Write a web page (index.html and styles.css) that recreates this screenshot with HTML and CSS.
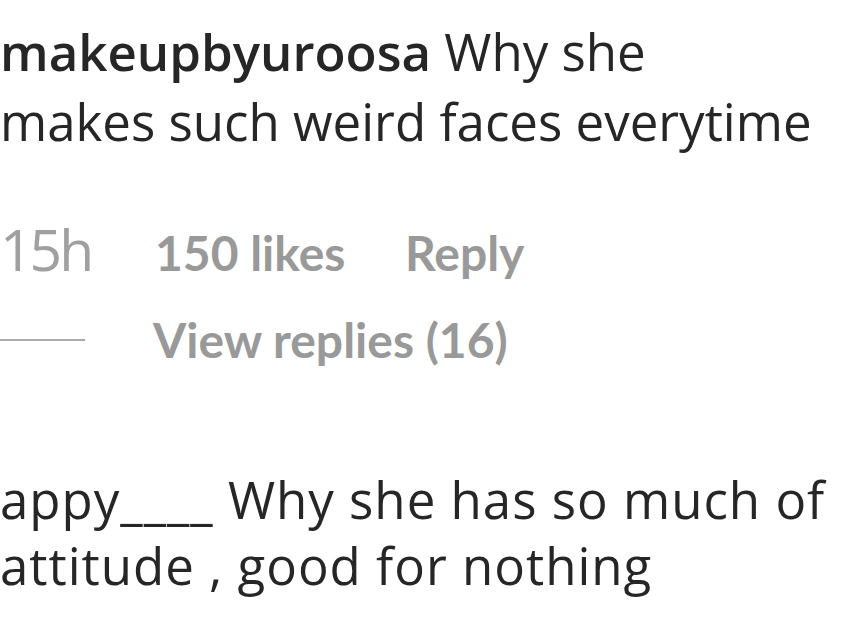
FILE: index.html
```html
<!DOCTYPE html>
<html>
<head>
  <meta charset="UTF-8">
  <title>Comments</title>
  <link rel="stylesheet" href="styles.css">
</head>
<body>
  <div class="comment">
    <p class="comment-text"><span class="user">makeupbyuroosa</span> Why she<br>makes such weird faces everytime</p>
    <div class="comment-meta">
      <span class="time">15h</span>
      <span class="likes">150 likes</span>
      <span class="reply">Reply</span>
    </div>
    <div class="replies">
      <span class="replies-line"></span>
      <span class="replies-link">View replies (16)</span>
    </div>
  </div>

  <div class="comment comment-next">
    <p class="comment-text narrow"><span class="user-plain">appy____</span> Why she has so much of<br>attitude , good for nothing</p>
  </div>
</body>
</html>
```

FILE: styles.css
```css
body {
  margin: 0;
  background: #fff;
  overflow: hidden;
}

.comment {
  padding-top: 16px;
}

.comment-text {
  margin: 0;
  font-family: "Open Sans", sans-serif;
  font-size: 51px;
  line-height: 70px;
  color: #262626;
  white-space: nowrap;
}

.user {
  font-weight: 600;
}

.comment-meta {
  display: flex;
  align-items: baseline;
  margin-top: 54px;
  color: #999;
  height: 60px;
}

.time {
  font-family: "Open Sans", sans-serif;
  font-size: 57px;
  font-weight: 400;
  letter-spacing: -3px;
  width: 155px;
  color: #a0a0a0;
}

.likes,
.reply,
.replies-link {
  font-family: Lato, sans-serif;
  font-weight: 700;
  font-size: 48px;
  color: #999;
}

.likes {
  width: 250px;
}

.replies {
  display: flex;
  align-items: center;
  margin-top: 41px;
}

.replies-line {
  width: 85px;
  height: 2px;
  background: #aaa;
  margin-right: 68px;
}

.comment-next {
  padding-top: 98px;
}

.narrow {
  font-size: 51px;
  letter-spacing: 1px;
  line-height: 66px;
}
```
